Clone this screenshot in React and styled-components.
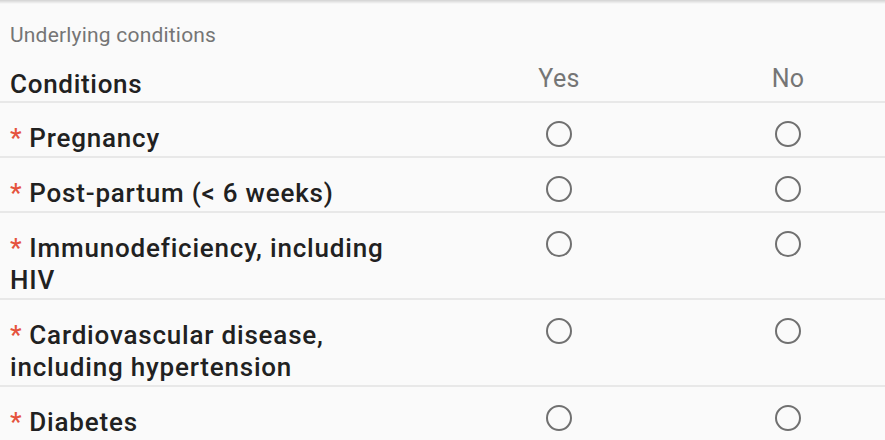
import React from "react";
import styled, { createGlobalStyle } from "styled-components";

const GlobalStyle = createGlobalStyle`
  html, body {
    margin: 0;
    padding: 0;
    background: #fafafa;
    font-family: Roboto, "Noto Sans", sans-serif;
    overflow: hidden;
  }
`;

const Page = styled.div`
  width: 885px;
  height: 440px;
  background: #fafafa;
  overflow: hidden;
`;

const TopShadow = styled.div`
  height: 4px;
  background: linear-gradient(to bottom, rgba(0, 0, 0, 0.16), rgba(0, 0, 0, 0));
`;

const SectionTitle = styled.div`
  padding: 19px 0 0 10px;
  font-size: 21px;
  line-height: 24px;
  letter-spacing: 0.2px;
  color: #757575;
`;

const Row = styled.div`
  display: grid;
  grid-template-columns: 394px 310px 148px;
  align-items: start;
  padding-left: 10px;
  border-bottom: 2px solid #e8e8e8;
`;

const HeaderLabel = styled.div`
  padding: 21px 0 1px;
  font-size: 26px;
  line-height: 32px;
  font-weight: 500;
  letter-spacing: 0.7px;
  color: #212121;
`;

const HeaderOption = styled.div`
  justify-self: center;
  padding-top: 16px;
  font-size: 25px;
  line-height: 32px;
  letter-spacing: 0.3px;
  color: #757575;
`;

const Label = styled.div`
  padding: 19px 0 2px;
  font-size: 26px;
  line-height: 32px;
  font-weight: 500;
  letter-spacing: 0.8px;
  color: #212121;
`;

const Required = styled.span`
  color: #e5533d;
  margin-right: 7px;
`;

const Radio = styled.span`
  justify-self: center;
  margin-top: 18px;
  width: 22px;
  height: 22px;
  border: 2px solid #707070;
  border-radius: 50%;
`;

const conditions = [
  "Pregnancy",
  "Post-partum (< 6 weeks)",
  "Immunodeficiency, including HIV",
  "Cardiovascular disease, including hypertension",
  "Diabetes",
];

export default function App() {
  return (
    <Page>
      <GlobalStyle />
      <TopShadow />
      <SectionTitle>Underlying conditions</SectionTitle>
      <Row>
        <HeaderLabel>Conditions</HeaderLabel>
        <HeaderOption>Yes</HeaderOption>
        <HeaderOption>No</HeaderOption>
      </Row>
      {conditions.map((c) => (
        <Row key={c}>
          <Label>
            <Required>*</Required>
            {c}
          </Label>
          <Radio />
          <Radio />
        </Row>
      ))}
    </Page>
  );
}
